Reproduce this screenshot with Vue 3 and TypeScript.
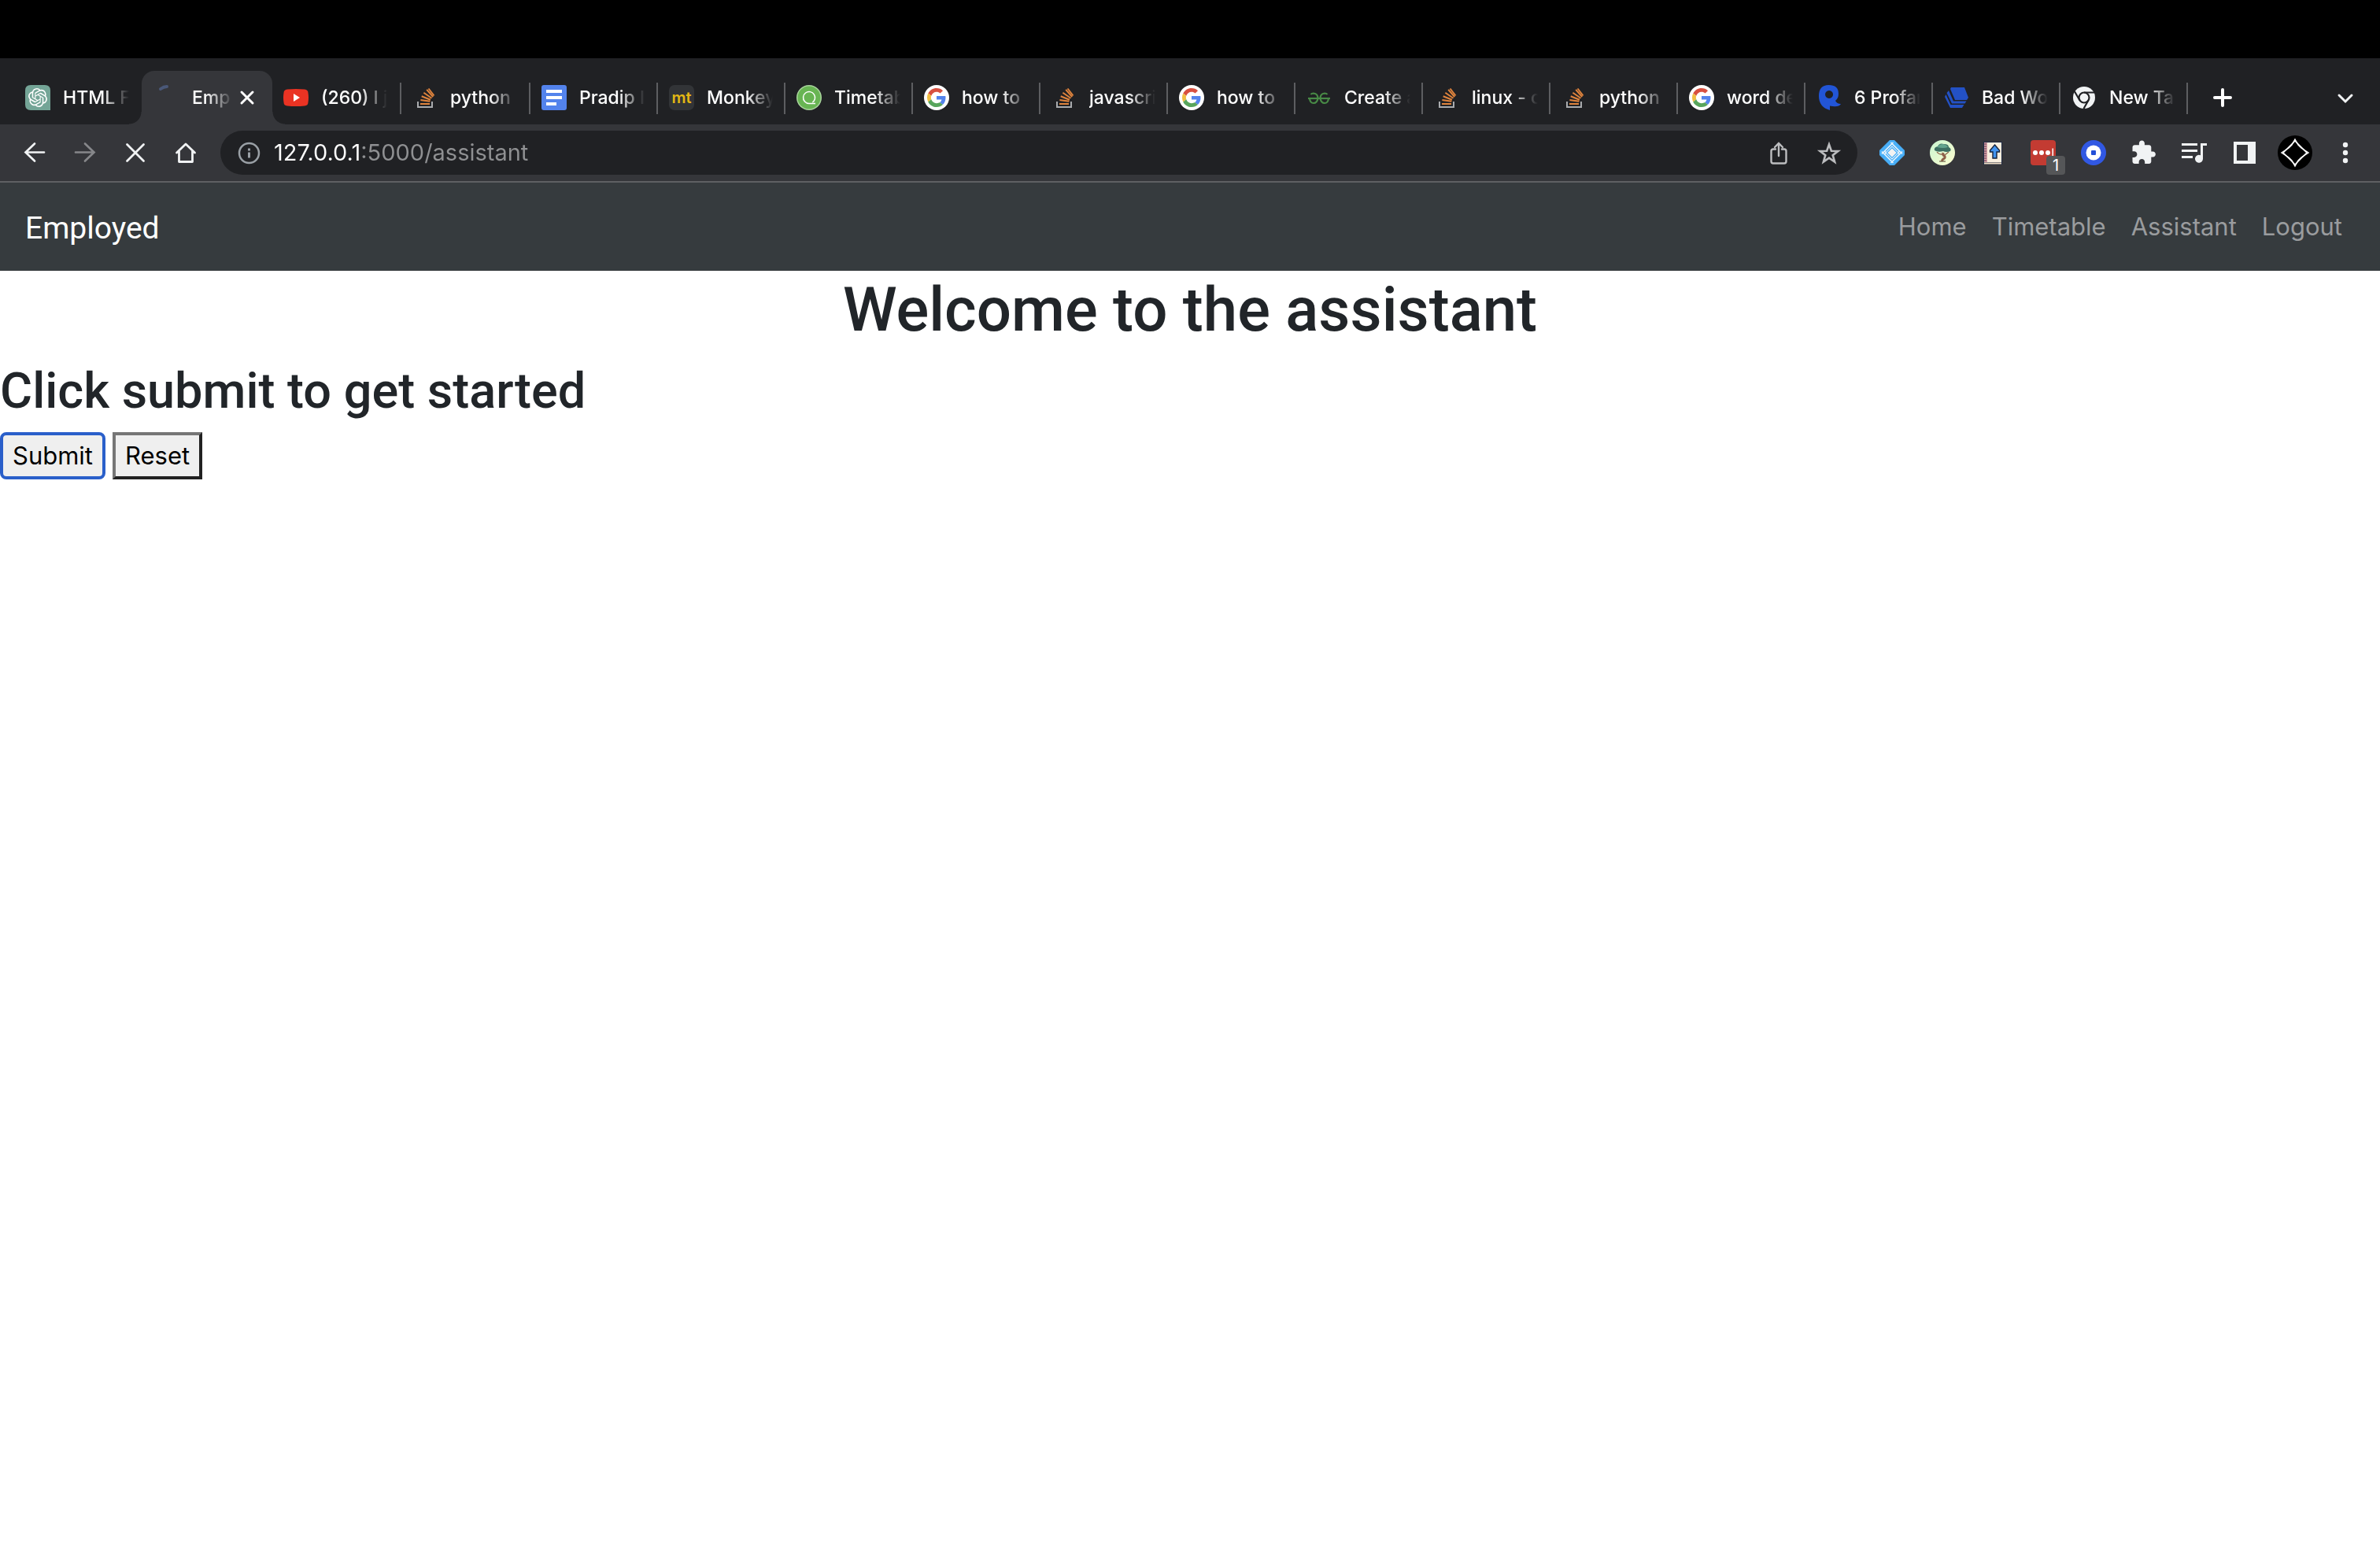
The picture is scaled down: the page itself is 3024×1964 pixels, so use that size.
<script setup lang="ts">
import { ref } from 'vue'

interface Tab {
  title: string
  icon: string
  active?: boolean
  wide?: boolean
  divider?: boolean
}

interface Tool {
  label: string
  icon: string
  size?: number
  dim?: boolean
  badge?: string
}

const icons: Record<string, string> = {
  chatgpt: `<path d="M7 0H25Q32 0 32 7V32H7Q0 32 0 25V7Q0 0 7 0Z" fill="#74a597"/><g transform="translate(4 4)" fill="#fff"><path d="M22.2819 9.8211a5.9847 5.9847 0 0 0-.5157-4.9108 6.0462 6.0462 0 0 0-6.5098-2.9A6.0651 6.0651 0 0 0 4.9807 4.1818a5.9847 5.9847 0 0 0-3.9977 2.9 6.0462 6.0462 0 0 0 .7427 7.0966 5.98 5.98 0 0 0 .511 4.9107 6.051 6.051 0 0 0 6.5146 2.9001A5.9847 5.9847 0 0 0 13.2599 24a6.0557 6.0557 0 0 0 5.7718-4.2058 5.9894 5.9894 0 0 0 3.9977-2.9001 6.0557 6.0557 0 0 0-.7475-7.0729zm-9.022 12.6081a4.4755 4.4755 0 0 1-2.8764-1.0408l.1419-.0804 4.7783-2.7582a.7948.7948 0 0 0 .3927-.6813v-6.7369l2.02 1.1686a.071.071 0 0 1 .038.052v5.5826a4.504 4.504 0 0 1-4.4945 4.4944zm-9.6607-4.1254a4.4708 4.4708 0 0 1-.5346-3.0137l.142.0852 4.783 2.7582a.7712.7712 0 0 0 .7806 0l5.8428-3.3685v2.3324a.0804.0804 0 0 1-.0332.0615L9.74 19.9502a4.4992 4.4992 0 0 1-6.1408-1.6464zM2.3408 7.8956a4.485 4.485 0 0 1 2.3655-1.9728V11.6a.7664.7664 0 0 0 .3879.6765l5.8144 3.3543-2.0201 1.1685a.0757.0757 0 0 1-.071 0l-4.8303-2.7865A4.504 4.504 0 0 1 2.3408 7.872zm16.5963 3.8558L13.1038 8.364 15.1192 7.2a.0757.0757 0 0 1 .071 0l4.8303 2.7913a4.4944 4.4944 0 0 1-.6765 8.1042v-5.6772a.79.79 0 0 0-.407-.667zm2.0107-3.0231l-.142-.0852-4.7735-2.7818a.7759.7759 0 0 0-.7854 0L9.409 9.2297V6.8974a.0662.0662 0 0 1 .0284-.0615l4.8303-2.7866a4.4992 4.4992 0 0 1 6.6802 4.66zM8.3065 12.863l-2.02-1.1638a.0804.0804 0 0 1-.038-.0567V6.0742a4.4992 4.4992 0 0 1 7.3757-3.4537l-.142.0805L8.704 5.459a.7948.7948 0 0 0-.3927.6813zm1.0976-2.3654l2.602-1.4998 2.6069 1.4998v2.9994l-2.5974 1.4997-2.6067-1.4997Z"/></g>`,
  spinner: `<path d="M8 5Q12 2 16 2" fill="none" stroke="#4a5878" stroke-width="4" stroke-linecap="round"/>`,
  youtube: `<path d="M5 5.500Q16 4.500 27 5.500Q31.500 6 31.500 10Q32.500 16 31.500 22Q31.500 26 27 26.500Q16 27.500 5 26.500Q.5 26 .5 22Q-.5 16 .5 10Q.5 6 5 5.500Z" fill="#ea3323"/><path d="M13 11v10l8-5z" fill="#fff"/>`,
  stack: `<path d="M7 21v7h18v-7" fill="none" stroke="#a9abae" stroke-width="2"/><g stroke="#e0843d" stroke-width="2" fill="none"><path d="M10 24h12M10.400 19.100l12 1.700M11.700 14.200l11.200 4.500M14.400 9.700l10.100 7M18.200 5.800l8 9.200" /><path d="M20.500 4.500l7 9"/></g>`,
  docs: `<rect width="32" height="32" rx="3" fill="#5383ec"/><path d="M6 6h20v4H6zM6 14h20v4H6zM6 22h13v4H6z" fill="#fff"/>`,
  monkey: `<rect width="32" height="32" rx="7" fill="#323437"/><text x="16" y="23" text-anchor="middle" font-family="Inter, sans-serif" font-size="20" font-weight="600" fill="#e2b714">mt</text>`,
  timetable: `<circle cx="16" cy="16" r="16" fill="#a9d49d"/><circle cx="16" cy="16" r="14.500" fill="#68b553"/><path d="M24 23.500h-8a7.500 7.500 0 1 1 7.300-5.500q-.8 2.500-3 4" fill="none" stroke="#fff" stroke-width="1.500"/>`,
  google: `<circle cx="16" cy="16" r="16" fill="#fff"/><g transform="translate(4 4) scale(.5)"><path fill="#d85040" d="M24 9.500c3.540 0 6.710 1.220 9.210 3.600l6.850-6.850C35.900 2.380 30.470 0 24 0 14.620 0 6.510 5.380 2.560 13.220l7.980 6.190C12.430 13.720 17.740 9.500 24 9.500z"/><path fill="#5383ec" d="M46.980 24.550c0-1.570-.15-3.090-.38-4.550H24v9.020h12.940c-.58 2.960-2.260 5.480-4.780 7.180l7.730 6c4.510-4.180 7.090-10.360 7.090-17.650z"/><path fill="#f1be42" d="M10.530 28.590c-.48-1.450-.76-2.990-.76-4.590s.27-3.140.76-4.590l-7.980-6.190C.92 16.460 0 20.120 0 24c0 3.880.92 7.540 2.560 10.780l7.970-6.190z"/><path fill="#58a55c" d="M24 48c6.480 0 11.930-2.130 15.890-5.810l-7.730-6c-2.150 1.450-4.920 2.300-8.160 2.300-6.260 0-11.570-4.220-13.470-9.910l-7.980 6.190C6.510 42.620 14.620 48 24 48z"/></g>`,
  geeks: `<g fill="none" stroke="#488a46" stroke-width="2.200"><path d="M5.500 12q1-1.500 3.500-1.500 5.500.5 5.500 6.500-1 6-5.500 6T4 17"/><path d="M26.500 12q-1-1.500-3.500-1.500-5.500.5-5.500 6.500 1 6 5.500 6t5-6"/><path d="M2 17h28"/></g>`,
  rlogo: `<path fill="#2255d6" fill-rule="evenodd" d="M3 14Q3 0 15.500 0Q28 0 28 11Q28 17 24 20Q26 24 31 24Q28 29 17 26.500V32Q3 28 3 14ZM16 7a5 5 0 1 0 .1 0Z"/>`,
  layers: `<g fill="#2351c5"><path d="M9 3h17l5 13-2 3H14L8 5z"/><path d="M6 7l6 13.500h16.500l-2 3H10L3.500 10z"/><path d="M2.500 12l6 13h17L23 29H8L1 15z"/></g>`,
  chrome: `<circle cx="16" cy="16" r="14" fill="#f1f3f4"/><circle cx="16" cy="16" r="6.500" fill="none" stroke="#202124" stroke-width="2.200"/><path d="M16 9.500h13M10.400 19.200L3.800 8M21.600 19.200L15.500 30" stroke="#202124" stroke-width="2.200"/>`,
  close: `<path d="M9 9l14 14M23 9L9 23" stroke="#fff" stroke-width="3" stroke-linecap="round"/>`,
  plus: `<path d="M16 6v20M6 16h20" stroke="#fff" stroke-width="4" stroke-linecap="round"/>`,
  chevron: `<path d="M8 13l8 8 8-8" fill="none" stroke="#f1f3f4" stroke-width="3" stroke-linecap="round"/>`,
  back: `<path d="M28 15.500H5M16 4.500L4.500 15.500 16 26.500" fill="none" stroke="currentColor" stroke-width="2.700" stroke-linecap="round"/>`,
  forward: `<path d="M4 15.500h23M16 4.500l11.500 11L16 26.500" fill="none" stroke="currentColor" stroke-width="2.700" stroke-linecap="round"/>`,
  stop: `<path d="M5.500 5.500l21 21M26.500 5.500l-21 21" stroke="currentColor" stroke-width="2.800" stroke-linecap="round"/>`,
  home: `<path d="M4.500 16L16 5l11.500 11M7.500 14v13.500h17V14" fill="none" stroke="currentColor" stroke-width="2.800" stroke-linecap="round" stroke-linejoin="round"/>`,
  info: `<circle cx="16.500" cy="16.500" r="12.500" fill="none" stroke="#9aa0a6" stroke-width="2.500"/><path d="M15 10.500h3v3h-3zM15 15.500h3v7h-3z" fill="#9aa0a6"/>`,
  share: `<path d="M12 11.500H9Q6.500 11.500 6.500 14V27Q6.500 29.500 9 29.500H23Q25.500 29.500 25.500 27V14Q25.500 11.500 23 11.500H20M16 20V4.500M11 9l5-5 5 5" fill="none" stroke="#bcbdbf" stroke-width="2.400" stroke-linecap="round"/>`,
  star: `<path d="M16 5.500l2.900 8.200 8.600.2-6.800 5.300 2.400 8.300L16 22.600l-7.100 4.900 2.400-8.300-6.800-5.300 8.600-.2z" fill="none" stroke="#bcbdbf" stroke-width="2.600"/>`,
  gem: `<path d="M13 0h6l13 13v6L19 32h-6L0 19v-6z" fill="#48aef7"/><g fill="none" stroke="#e9f4fc" stroke-width="1.600"><path d="M3 14.500l14.500 14.500M3 17.500L17.500 3M14.500 3L29 17.500M29 14.500L14.500 29M7 17.500l9-9 9 9M7 14.500l9 9 9-9"/></g><path d="M16 9.500l6.500 6.500-6.500 6.500L9.500 16z" fill="#f2f2f2" stroke="#48aef7" stroke-width="1.200"/>`,
  tree: `<defs><linearGradient id="leafbg" x2="1" y2="1"><stop stop-color="#c9f6d2"/><stop offset="1" stop-color="#fdfccf"/></linearGradient></defs><circle cx="16" cy="16" r="16" fill="url(#leafbg)"/><path d="M9 15q3 4 8 3M24 15l-5 4" fill="none" stroke="#8e5f48" stroke-width="1.200"/><path d="M17 16q-1 3 2 4.500 1 2.500-2 3.500-1.500 1-1.500 3" fill="none" stroke="#8e5f48" stroke-width="3"/><path d="M12 27h8" stroke="#6b5a44" stroke-width="1.200"/><path d="M6 13q-1-4 4-5 2-5 8-3 6 0 6 4 4 2 2 5-5 2-9 0-7 2-11-1z" fill="#3d6f62"/><path d="M9 9q3-4 8-4 5 1 6 4-6 2-14 0z" fill="#63a48d"/>`,
  book: `<path d="M4 2h24v29H4z" fill="#1e2b45"/><path d="M9 3h18v25H9z" fill="#f9efdf"/><path d="M5 3h4v25H5z" fill="#d7a0a5"/><path d="M5 5h3M5 8h3M5 11h3M5 14h3M5 17h3M5 20h3M5 23h3M5 26h3" stroke="#5b3950"/><path d="M5 28.500h22v2H5z" fill="#f2dfc5"/><path d="M18.500 6l6 7v2H21v8h-5v-8h-3.500v-2z" fill="#4394f0" stroke="#16233c" stroke-width="1.400"/>`,
  lastpass: `<rect width="32" height="32" rx="4" fill="#c33b32"/><g fill="#fff"><circle cx="6" cy="16" r="3"/><circle cx="14" cy="16" r="3"/><circle cx="22" cy="16" r="3"/><path d="M27.500 10.500h1.500v11h-1.500z"/></g>`,
  coin: `<circle cx="16" cy="16" r="16" fill="#3158e3"/><circle cx="16" cy="16" r="9.500" fill="#fff"/><rect x="13" y="13" width="6" height="6" rx="1" fill="#2450d8"/>`,
  puzzle: `<path transform="translate(-1.300 -.8) scale(1.400)" d="M20.500 11H19V7c0-1.100-.9-2-2-2h-4V3.500C13 2.120 11.880 1 10.500 1S8 2.120 8 3.500V5H4c-1.100 0-1.990.9-1.990 2v3.800H3.500c1.490 0 2.700 1.210 2.700 2.700s-1.210 2.700-2.700 2.700H2V20c0 1.100.9 2 2 2h3.800v-1.500c0-1.490 1.210-2.700 2.700-2.700 1.490 0 2.700 1.210 2.700 2.700V22H17c1.100 0 2-.9 2-2v-4h1.500c1.380 0 2.500-1.120 2.500-2.500S21.880 11 20.500 11z" fill="#f1f3f4"/>`,
  queue: `<path d="M0 4h20v3H0zM0 12h20v3H0zM0 20h14v3H0z" fill="#f1f3f4"/><path d="M24 4h8v3h-5v17a5 5 0 1 1-3-4.800z" fill="#f1f3f4"/>`,
  panel: `<path fill-rule="evenodd" d="M2 2h28v28H2zM6 6v20h14V6z" fill="#f1f3f4"/>`,
  avatar: `<circle cx="22" cy="22" r="22" fill="#000"/><g fill="none" stroke="#fff" stroke-width="1.500"><path d="M22 5l4 7 4 4 9 6-9 6-4 4-4 7-4-7-4-4-9-6 9-6 4-4z"/><path d="M22 7l15 15-15 15L7 22z"/></g>`,
  dots: `<g fill="#f1f3f4"><circle cx="16" cy="6" r="3.200"/><circle cx="16" cy="16" r="3.200"/><circle cx="16" cy="26" r="3.200"/></g>`,
}

const tabs: Tab[] = [
  { title: 'HTML F', icon: 'chatgpt' },
  { title: 'Emp', icon: 'spinner', active: true },
  { title: '(260) I j', icon: 'youtube', wide: true, divider: true },
  { title: 'python', icon: 'stack', wide: true, divider: true },
  { title: 'Pradip I', icon: 'docs', divider: true },
  { title: 'Monkey', icon: 'monkey', divider: true },
  { title: 'Timetab', icon: 'timetable', divider: true },
  { title: 'how to', icon: 'google', divider: true },
  { title: 'javascri', icon: 'stack', divider: true },
  { title: 'how to', icon: 'google', divider: true },
  { title: 'Create a', icon: 'geeks', divider: true },
  { title: 'linux - c', icon: 'stack', divider: true },
  { title: 'python', icon: 'stack', divider: true },
  { title: 'word de', icon: 'google', divider: true },
  { title: '6 Profan', icon: 'rlogo', divider: true },
  { title: 'Bad Wo', icon: 'layers', divider: true },
  { title: 'New Ta', icon: 'chrome', divider: true },
]

const navigation: Tool[] = [
  { label: 'Back', icon: 'back' },
  { label: 'Forward', icon: 'forward', dim: true },
  { label: 'Stop', icon: 'stop' },
  { label: 'Home', icon: 'home' },
]

const extensions: Tool[] = [
  { label: 'Gem extension', icon: 'gem' },
  { label: 'Tree extension', icon: 'tree' },
  { label: 'Notebook extension', icon: 'book' },
  { label: 'Passwords', icon: 'lastpass', badge: '1' },
  { label: 'Wallet', icon: 'coin' },
  { label: 'Extensions', icon: 'puzzle' },
  { label: 'Media', icon: 'queue' },
  { label: 'Side panel', icon: 'panel' },
  { label: 'Profile', icon: 'avatar', size: 44 },
  { label: 'Menu', icon: 'dots' },
]

const links = ['Home', 'Timetable', 'Assistant', 'Logout']
const address = ref('127.0.0.1:5000/assistant')
</script>

<template>
  <div class="window">
    <div class="menubar"></div>
    <div class="tabstrip">
      <div v-for="(tab, i) in tabs" :key="i" class="tab" :class="{ active: tab.active, wide: tab.wide, divider: tab.divider }">
        <button type="button" class="tab-main">
          <svg class="icon" viewBox="0 0 32 32" v-html="icons[tab.icon]"></svg>
          <span class="title">{{ tab.title }}</span>
        </button>
        <button v-if="tab.active" type="button" class="tab-close" aria-label="Close tab">
          <svg class="icon" viewBox="0 0 32 32" v-html="icons.close"></svg>
        </button>
      </div>
      <button type="button" class="tool new-tab" aria-label="New tab">
        <svg class="icon" viewBox="0 0 32 32" v-html="icons.plus"></svg>
      </button>
      <button type="button" class="tool tab-search" aria-label="Search tabs">
        <svg class="icon" viewBox="0 0 32 32" v-html="icons.chevron"></svg>
      </button>
    </div>

    <div class="toolbar">
      <div class="group">
        <button v-for="tool in navigation" :key="tool.label" type="button" class="tool" :class="{ dim: tool.dim }" :aria-label="tool.label">
          <svg class="icon" viewBox="0 0 32 32" v-html="icons[tool.icon]"></svg>
        </button>
      </div>
      <div class="omnibox">
        <button type="button" class="tool" aria-label="Site information">
          <svg class="icon" viewBox="0 0 32 32" v-html="icons.info"></svg>
        </button>
        <input v-model="address" class="address" type="text" aria-label="Address" spellcheck="false" />
        <button type="button" class="tool" aria-label="Share">
          <svg class="icon" viewBox="0 0 32 32" v-html="icons.share"></svg>
        </button>
        <button type="button" class="tool" aria-label="Bookmark">
          <svg class="icon" viewBox="0 0 32 32" v-html="icons.star"></svg>
        </button>
      </div>
      <div class="group">
        <button v-for="tool in extensions" :key="tool.label" type="button" class="tool" :aria-label="tool.label">
          <svg class="icon" :class="{ large: tool.size }" :viewBox="`0 0 ${tool.size ?? 32} ${tool.size ?? 32}`" v-html="icons[tool.icon]"></svg>
          <span v-if="tool.badge" class="badge">{{ tool.badge }}</span>
        </button>
      </div>
    </div>

    <nav class="navbar">
      <a class="brand" href="#">Employed</a>
      <div class="links">
        <a v-for="link in links" :key="link" href="#">{{ link }}</a>
      </div>
    </nav>

    <main>
      <h1>Welcome to the assistant</h1>
      <h2>Click submit to get started</h2>
      <form class="actions" @submit.prevent>
        <button type="submit" class="submit">Submit</button>
        <button type="reset" class="reset">Reset</button>
      </form>
    </main>
  </div>
</template>

<style>
body {
  margin: 0;
  background: #fff;
}
</style>

<style scoped>
.window {
  font-family: Inter, "Liberation Sans", sans-serif;
  color: #212529;
}
button {
  font: inherit;
}
a {
  text-decoration: none;
}
.menubar {
  height: 74px;
  background: #000;
}
.tabstrip {
  display: flex;
  box-sizing: border-box;
  height: 84px;
  padding: 16px 12px 0 18px;
  background: #202124;
}
.tab {
  position: relative;
  display: flex;
  flex: none;
  align-items: center;
  box-sizing: border-box;
  width: 162px;
  padding: 0 14px;
}
.tab.wide {
  width: 164px;
  padding-right: 16px;
}
.tab.active {
  width: 166px;
  padding: 0 16px;
  border-radius: 16px 16px 0 0;
  background: #35363a;
}
.tab.active::before,
.tab.active::after {
  content: "";
  position: absolute;
  bottom: 0;
  width: 16px;
  height: 16px;
}
.tab.active::before {
  right: 100%;
  background: radial-gradient(circle at 0 0, #202124 15px, #35363a 16px);
}
.tab.active::after {
  left: 100%;
  background: radial-gradient(circle at 100% 0, #202124 15px, #35363a 16px);
}
.tab.divider::after {
  content: "";
  position: absolute;
  top: 15px;
  right: 0;
  width: 2px;
  height: 40px;
  background: #5d5e61;
}
.tab-main,
.tab-close,
.tool {
  display: flex;
  align-items: center;
  padding: 0;
  border: 0;
  background: none;
  color: #f1f3f4;
}
.tab-main {
  flex: 1;
  gap: 16px;
  min-width: 0;
}
.title {
  flex: 1;
  min-width: 0;
  overflow: hidden;
  color: #fff;
  font-size: 23px;
  font-weight: 500;
  line-height: 32px;
  text-align: left;
  white-space: pre;
  mask-image: linear-gradient(to left, transparent 2px, #000 36px);
}
.icon {
  flex: none;
  width: 32px;
  height: 32px;
}
.icon.large {
  width: 44px;
  height: 44px;
}
.tool {
  position: relative;
  flex: none;
  justify-content: center;
  width: 64px;
  height: 56px;
}
.tool.dim {
  color: #86878a;
}
.new-tab,
.tab-search {
  height: 68px;
}
.new-tab {
  margin-left: 12px;
}
.tab-search {
  margin-left: auto;
}
.toolbar {
  display: flex;
  gap: 12px;
  padding: 8px 12px;
  border-bottom: 2px solid #5f6063;
  background: #35363a;
}
.group {
  display: flex;
}
.omnibox {
  display: flex;
  flex: 1;
  align-items: center;
  padding: 0 4px;
  border-radius: 28px;
  background: #202124;
}
.address {
  flex: 1;
  min-width: 0;
  padding: 0;
  border: 0;
  outline: 0;
  background: linear-gradient(to right, #fff 112px, #8f9092 112px);
  background-clip: text;
  color: transparent;
  font: 400 29px/40px Inter, "Liberation Sans", sans-serif;
}
.badge {
  position: absolute;
  right: 4px;
  bottom: 0;
  width: 24px;
  border-radius: 4px;
  background: #555658;
  color: #fff;
  font-size: 20px;
  line-height: 24px;
}
.navbar {
  display: flex;
  align-items: center;
  justify-content: space-between;
  height: 112px;
  padding: 0 32px;
  background: #363b3e;
}
.brand {
  padding-top: 4px;
  color: #fff;
  font-family: Roboto, "Liberation Sans", sans-serif;
  font-size: 39px;
  line-height: 60px;
}
.links {
  display: flex;
}
.links a {
  padding: 16px;
  color: #9a9c9e;
  font-size: 31px;
  line-height: 48px;
}
h1,
h2 {
  margin: 0 0 14px;
  font-family: Roboto, "Liberation Sans", sans-serif;
  font-weight: 500;
}
h1 {
  font-size: 78px;
  line-height: 100px;
  text-align: center;
}
h2 {
  font-size: 63px;
  line-height: 77px;
}
.actions {
  display: flex;
  gap: 9px;
}
.actions button {
  padding: 2px 12px;
  border: 4px solid;
  background: #efefef;
  color: #000;
  font-size: 31px;
  line-height: 48px;
}
.actions .submit {
  border-color: #2a5fca;
  border-radius: 8px;
}
.actions .reset {
  border-color: #767676 #212121 #212121 #767676;
}
</style>
